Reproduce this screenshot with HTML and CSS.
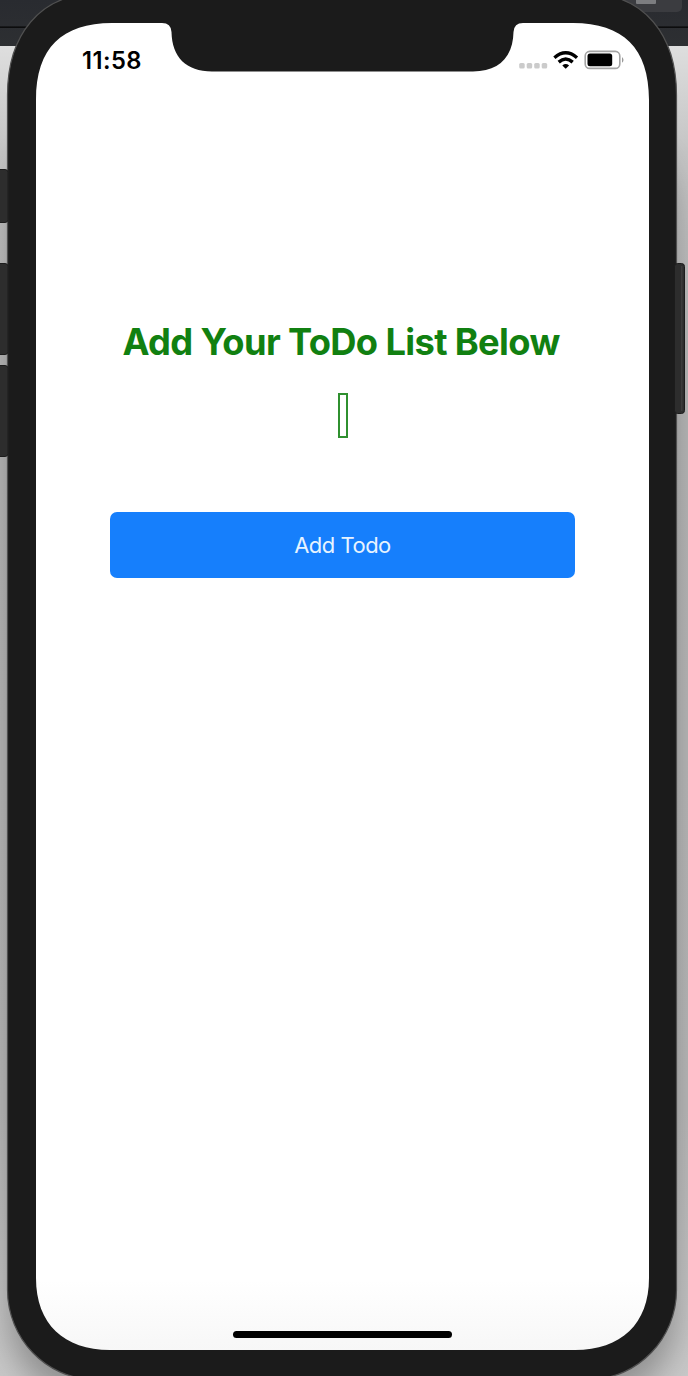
FILE: index.html
```html
<!DOCTYPE html>
<html lang="en">
<head>
<meta charset="utf-8">
<title>Todo</title>
<link rel="stylesheet" href="styles.css">
</head>
<body>
<div class="stage">
  <svg class="device" viewBox="0 0 688 1376" aria-hidden="true">
    <defs>
      <linearGradient id="wall" x1="0" y1="0" x2="0" y2="1"><stop offset="0" stop-color="#dedede"/><stop offset=".08" stop-color="#c4c4c4"/><stop offset=".25" stop-color="#b6b6b6"/><stop offset=".8" stop-color="#b8b8b8"/><stop offset="1" stop-color="#c8c8c8"/></linearGradient>
      <linearGradient id="bar" x1="0" y1="0" x2="0" y2="1"><stop offset="0" stop-color="#292b30"/><stop offset="1" stop-color="#2d2f32"/></linearGradient>
      <linearGradient id="glass" x1="0" y1="1280" x2="0" y2="1350" gradientUnits="userSpaceOnUse"><stop offset="0" stop-color="#fff"/><stop offset="1" stop-color="#f7f7f7"/></linearGradient>
      <filter id="soft" x="-10%" y="-10%" width="120%" height="120%"><feGaussianBlur stdDeviation="16"/></filter>
      <clipPath id="below"><rect y="46" width="688" height="1330"/></clipPath>
    </defs>
    <rect y="46" width="688" height="1330" fill="url(#wall)"/>
    <g clip-path="url(#below)"><rect x="10" y="130" width="664" height="1270" rx="80" fill="#000" opacity=".28" filter="url(#soft)"/></g>
    <rect width="688" height="46" fill="url(#bar)"/>
    <rect y="26.5" width="688" height="1.3" fill="#050505"/>
    <rect x="600" y="-10" width="82" height="22" rx="5" fill="#3b3c40"/>
    <rect x="636" y="-4" width="20" height="8" rx="1" fill="#7c7d80"/>
    <path d="M7.500 95C7.500 35 40-6 95-6H589C644-6 676.500 35 676.500 95V1290C676.500 1338 638 1379 591 1379H93C46 1379 7.500 1338 7.500 1290Z" fill="#1b1b1b" stroke="#505050" stroke-width="1.200"/>
    <g fill="#2d2d2d" stroke="#1c1c1c">
      <rect x="-5" y="169.500" width="13" height="53" rx="3"/>
      <rect x="-5" y="263.500" width="13" height="91" rx="3"/>
      <rect x="-5" y="365.500" width="13" height="91" rx="3"/>
    </g>
    <rect x="674.500" y="263.500" width="10" height="150" rx="3" fill="#2d2d2d" stroke="#1c1c1c"/>
    <path d="M681.800 266V411" stroke="#444"/>
    <path d="M36 100C36 48 62 23 112 23H162Q171 23 171.500 32C172 57 186 71.500 212 71.500H473C499 71.500 513 57 513.500 32Q514 23 523 23H573C623 23 649 48 649 100V1278C649 1324 621 1350 575 1350H110C64 1350 36 1324 36 1278Z" fill="url(#glass)"/>
  </svg>
  <main class="screen">
    <header class="status">
      <span class="time">11:58</span>
      <svg class="indicators" width="106" height="20" viewBox="0 0 106 20" aria-hidden="true">
        <g fill="#cbcbcb"><rect x="1.200" y="13" width="5.500" height="5.500" rx="1.500"/><rect x="8.700" y="13" width="5.500" height="5.500" rx="1.500"/><rect x="16.200" y="13" width="5.500" height="5.500" rx="1.500"/><rect x="23.700" y="13" width="5.500" height="5.500" rx="1.500"/></g>
        <g fill="none" stroke="#000" stroke-width="3.400"><path d="M36.400 7.700Q47.700-2 59 7.700"/><path d="M40.700 12.100Q47.700 6 54.700 12.100"/></g>
        <path d="M44.300 15.400Q47.700 12.500 51.100 15.400L47.700 18.800Z"/>
        <rect x="67.200" y="1.400" width="34.600" height="17" rx="4.500" fill="none" stroke="#a4a4a4" stroke-width="1.600"/>
        <rect x="69.500" y="3.600" width="24.700" height="12.700" rx="2.500"/>
        <path d="M104 7Q107 9.900 104 12.800Z" fill="#999"/>
      </svg>
    </header>
    <section class="content">
      <h1 class="title">Add Your ToDo List Below</h1>
      <div class="field"></div>
      <button class="add">Add Todo</button>
    </section>
    <div class="home"></div>
  </main>
</div>
</body>
</html>
```
FILE: styles.css
```css
body { margin: 0; background: #aaa; font-family: Inter, "Liberation Sans", sans-serif; }
.stage { position: relative; width: 688px; height: 1376px; overflow: hidden; }
.device { position: absolute; inset: 0; width: 688px; height: 1376px; }
.screen { position: relative; box-sizing: border-box; height: 1350px; margin: 0 39px 0 36px; padding-top: 23px; display: flex; flex-direction: column; }
.status { display: flex; justify-content: space-between; align-items: center; height: 74px; padding: 0 25px 0 46px; }
.time { font-size: 23.7px; font-weight: 600; letter-spacing: .45px; }
.content { display: flex; flex-direction: column; align-items: center; padding-top: 222px; flex: 1; }
.title { margin: 0 3px 0 0; font-size: 36.3px; line-height: 46px; font-weight: 650; letter-spacing: -.65px; color: #118011; white-space: nowrap; }
.field { box-sizing: border-box; width: 10px; height: 45px; margin-top: 28px; border: 2px solid #2f902f; }
.add { width: 465px; height: 66px; margin-top: 74px; padding: 0; border: 0; border-radius: 7px; background: #167ffc; color: #e6f3ff; font: 400 22px Inter, sans-serif; letter-spacing: -.5px; }
.home { width: 219px; height: 7px; margin: 0 auto 12px; border-radius: 4px; background: #000; }
```
